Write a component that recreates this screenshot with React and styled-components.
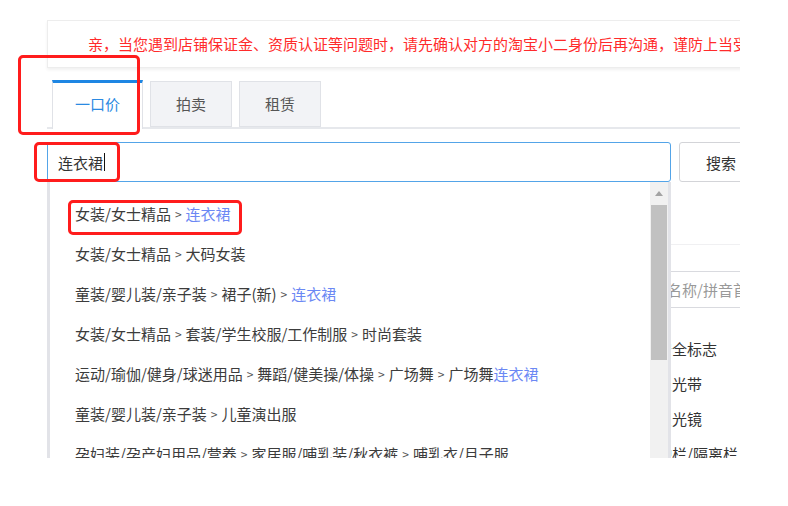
import React from "react";
import styled, { createGlobalStyle } from "styled-components";

const GlobalStyle = createGlobalStyle`
  html, body { margin: 0; padding: 0; background: #ffffff; }
  body { font-family: "Noto Sans CJK SC", "Noto Sans", sans-serif; font-size: 15px; color: #333; }
  * { box-sizing: border-box; }
`;

const Viewport = styled.div`
  position: relative;
  width: 740px;
  height: 458px;
  overflow: hidden;
  background: #fff;
`;

const Main = styled.div`
  width: 763px;
  margin-left: 47px;
  padding-top: 20px;
`;

const Notice = styled.div`
  height: 48px;
  border: 1px solid #ededed;
  box-shadow: 0 2px 3px rgba(0, 0, 0, 0.06);
  padding-left: 40px;
  line-height: 46px;
  color: #ff2b2b;
  font-size: 15px;
  white-space: nowrap;
  overflow: hidden;
`;

const TabBar = styled.div`
  margin-top: 12px;
  height: 49px;
  display: flex;
  align-items: flex-end;
  gap: 7px;
  padding-left: 5px;
  border-bottom: 2px solid #e6e8ec;
`;

const Tab = styled.div`
  width: ${(p) => (p.$active ? 91 : 82)}px;
  height: ${(p) => (p.$active ? 49 : 46)}px;
  margin-bottom: ${(p) => (p.$active ? -2 : 0)}px;
  display: flex;
  align-items: center;
  justify-content: center;
  font-size: 15px;
  color: ${(p) => (p.$active ? "#2b8ae2" : "#555")};
  background: ${(p) => (p.$active ? "#fff" : "#f2f3f6")};
  border: 1px solid #e0e2e7;
  border-top: ${(p) => (p.$active ? "3px solid #1e86e3" : "1px solid #e0e2e7")};
  border-bottom: ${(p) => (p.$active ? "none" : "1px solid #e0e2e7")};
  padding-bottom: ${(p) => (p.$active ? 5 : 2)}px;
`;

const SearchArea = styled.div`
  position: relative;
  margin-top: 13px;
`;

const SearchRow = styled.div`
  display: flex;
  gap: 8px;
`;

const SearchBox = styled.div`
  width: 624px;
  height: 40px;
  border: 1.5px solid #53a4e8;
  border-radius: 3px;
  display: flex;
  align-items: center;
  padding-left: 10px;
  color: #333;
  font-size: 15px;
`;

const Caret = styled.span`
  display: inline-block;
  width: 1px;
  height: 18px;
  background: #111;
  margin-left: 1px;
`;

const SearchButton = styled.div`
  width: 84px;
  height: 40px;
  border: 1px solid #d3d4d8;
  border-radius: 3px;
  display: flex;
  align-items: center;
  justify-content: center;
  color: #333;
  font-size: 15px;
  background: #fff;
`;

const CategoryPanel = styled.div`
  display: grid;
  grid-template-columns: 282px 271px 1fr;
  gap: 12px;
`;

const CategoryColumn = styled.div`
  display: flex;
  flex-direction: column;
`;

const ColumnHead = styled.div`
  height: 63px;
  border-bottom: 1px solid #f0f0f2;
`;

const FilterInput = styled.div`
  margin-top: 26px;
  height: 37px;
  border: 1px solid #d9dadf;
  display: flex;
  align-items: center;
  padding-left: 12px;
  color: #999;
  font-size: 15px;
  white-space: nowrap;
`;

const CategoryList = styled.div`
  margin-top: 23px;
  padding-left: 33px;
`;

const CategoryItem = styled.div`
  height: 35px;
  line-height: 35px;
  color: #333;
  font-size: 15px;
  white-space: nowrap;
`;

const Dropdown = styled.div`
  position: absolute;
  top: 40px;
  left: 0;
  width: 624px;
  height: 320px;
  background: #fff;
  border-left: 3px solid #e2e3e8;
  border-right: 3px solid #e2e3e8;
  display: flex;
  z-index: 2;
`;

const SuggestList = styled.div`
  flex: 1;
  padding: 12px 0 0 25px;
`;

const SuggestItem = styled.div`
  height: 40px;
  line-height: 40px;
  color: #3c3c3c;
  font-size: 15px;
  white-space: nowrap;
`;

const Sep = styled.span`
  display: inline-block;
  margin: 0 4px;
  font-size: 12px;
  color: #555;
  vertical-align: 1px;
`;

const Hit = styled.span`
  color: #6b88f4;
`;

const Scrollbar = styled.div`
  width: 18px;
  background: #f1f1f1;
  display: flex;
  flex-direction: column;
  align-items: center;
`;

const ArrowUp = styled.div`
  margin-top: 9px;
  width: 0;
  height: 0;
  border-left: 4px solid transparent;
  border-right: 4px solid transparent;
  border-bottom: 5px solid #a3a3a3;
`;

const Thumb = styled.div`
  margin-top: 9px;
  width: 16px;
  height: 155px;
  background: #c1c1c1;
`;

const Mark = styled.div`
  position: absolute;
  left: ${(p) => p.$x}px;
  top: ${(p) => p.$y}px;
  width: ${(p) => p.$w}px;
  height: ${(p) => p.$h}px;
  border: 3px solid #ff1c1c;
  border-radius: 5px;
  z-index: 5;
  pointer-events: none;
`;

const suggestions = [
  [["女装/女士精品"], ["连衣裙", true]],
  [["女装/女士精品"], ["大码女装"]],
  [["童装/婴儿装/亲子装"], ["裙子(新)"], ["连衣裙", true]],
  [["女装/女士精品"], ["套装/学生校服/工作制服"], ["时尚套装"]],
  [["运动/瑜伽/健身/球迷用品"], ["舞蹈/健美操/体操"], ["广场舞"], ["广场舞", false, "连衣裙"]],
  [["童装/婴儿装/亲子装"], ["儿童演出服"]],
  [["孕妇装/孕产妇用品/营养"], ["家居服/哺乳装/秋衣裤"], ["哺乳衣/月子服"]],
];

function Segment({ seg }) {
  const [text, hit, tail] = seg;
  if (hit) return <Hit>{text}</Hit>;
  return (
    <>
      {text}
      {tail && <Hit>{tail}</Hit>}
    </>
  );
}

export default function App() {
  return (
    <>
      <GlobalStyle />
      <Viewport>
        <Main>
          <Notice>
            亲，当您遇到店铺保证金、资质认证等问题时，请先确认对方的淘宝小二身份后再沟通，谨防上当受骗！
          </Notice>
          <TabBar>
            <Tab $active>一口价</Tab>
            <Tab>拍卖</Tab>
            <Tab>租赁</Tab>
          </TabBar>
          <SearchArea>
            <SearchRow>
              <SearchBox>
                连衣裙
                <Caret />
              </SearchBox>
              <SearchButton>搜索</SearchButton>
            </SearchRow>
            <CategoryPanel>
              <CategoryColumn>
                <ColumnHead />
              </CategoryColumn>
              <CategoryColumn>
                <ColumnHead />
              </CategoryColumn>
              <CategoryColumn>
                <ColumnHead />
                <FilterInput>输入名称/拼音首字母</FilterInput>
                <CategoryList>
                  <CategoryItem>安全标志</CategoryItem>
                  <CategoryItem>反光带</CategoryItem>
                  <CategoryItem>反光镜</CategoryItem>
                  <CategoryItem>护栏/隔离栏</CategoryItem>
                </CategoryList>
              </CategoryColumn>
            </CategoryPanel>
            <Dropdown>
              <SuggestList>
                {suggestions.map((row, i) => (
                  <SuggestItem key={i}>
                    {row.map((seg, j) => (
                      <React.Fragment key={j}>
                        {j > 0 && <Sep>&gt;</Sep>}
                        <Segment seg={seg} />
                      </React.Fragment>
                    ))}
                  </SuggestItem>
                ))}
              </SuggestList>
              <Scrollbar>
                <ArrowUp />
                <Thumb />
              </Scrollbar>
            </Dropdown>
          </SearchArea>
        </Main>
        <Mark $x={18} $y={55} $w={122} $h={80} />
        <Mark $x={34} $y={142} $w={86} $h={40} />
        <Mark $x={68} $y={200} $w={174} $h={35} />
      </Viewport>
    </>
  );
}
